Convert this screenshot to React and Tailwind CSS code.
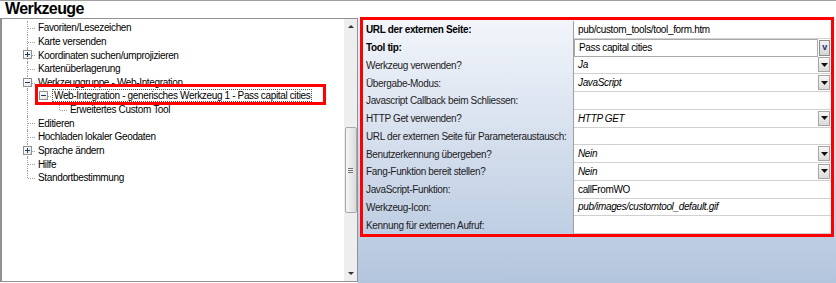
import React from "react";

const treeItems = [
  { level: 0, text: "Favoriten/Lesezeichen" },
  { level: 0, text: "Karte versenden" },
  { level: 0, text: "Koordinaten suchen/umprojizieren", box: "+" },
  { level: 0, text: "Kartenüberlagerung" },
  { level: 0, text: "Werkzeuggruppe - Web-Integration", box: "-" },
  { level: 1, text: "Web-Integration - generisches Werkzeug 1 - Pass capital cities", box: "-", focus: true },
  { level: 2, text: "Erweitertes Custom Tool" },
  { level: 0, text: "Editieren" },
  { level: 0, text: "Hochladen lokaler Geodaten" },
  { level: 0, text: "Sprache ändern", box: "+" },
  { level: 0, text: "Hilfe" },
  { level: 0, text: "Standortbestimmung", last: true },
];

const rows = [
  { label: "URL der externen Seite:", bold: true, value: "pub/custom_tools/tool_form.htm" },
  { label: "Tool tip:", bold: true, value: "Pass capital cities", type: "tooltip" },
  { label: "Werkzeug verwenden?", value: "Ja", italic: true, type: "dropdown" },
  { label: "Übergabe-Modus:", value: "JavaScript", italic: true, type: "dropdown" },
  { label: "Javascript Callback beim Schliessen:", value: "" },
  { label: "HTTP Get verwenden?", value: "HTTP GET", italic: true, type: "dropdown" },
  { label: "URL der externen Seite für Parameteraustausch:", value: "" },
  { label: "Benutzerkennung übergeben?", value: "Nein", italic: true, type: "dropdown" },
  { label: "Fang-Funktion bereit stellen?", value: "Nein", italic: true, type: "dropdown" },
  { label: "JavaScript-Funktion:", value: "callFromWO" },
  { label: "Werkzeug-Icon:", value: "pub/images/customtool_default.gif", italic: true },
  { label: "Kennung für externen Aufruf:", value: "" },
];

function ExpandBox({ sign }) {
  return (
    <div className="absolute left-[4px] top-[2px] w-[9px] h-[9px] border border-[#919191] bg-gradient-to-br from-white to-[#e6e6e6] flex items-center justify-center">
      <div className="relative w-[5px] h-[5px]">
        <div className="absolute left-0 top-[2px] w-[5px] h-[1px] bg-[#1c3b6e]" />
        {sign === "+" && <div className="absolute left-[2px] top-0 w-[1px] h-[5px] bg-[#1c3b6e]" />}
      </div>
    </div>
  );
}

function TreeRow({ item }) {
  const cols = [];
  for (let l = 0; l <= item.level; l++) {
    const own = l === item.level;
    let vertical = null;
    if (!own) {
      if (l === 0) vertical = "full";
    } else {
      if (item.level === 0) vertical = item.last ? "half" : "full";
      else vertical = "half";
    }
    cols.push(
      <div key={l} className="relative w-[16px] h-full shrink-0">
        {vertical === "full" && (
          <div className="absolute left-[8px] top-0 bottom-0 border-l border-dotted border-[#a0a0a0]" />
        )}
        {vertical === "half" && (
          <div className="absolute left-[8px] top-0 h-[7px] border-l border-dotted border-[#a0a0a0]" />
        )}
        {own && (
          <div className="absolute left-[9px] right-0 top-[7px] border-t border-dotted border-[#a0a0a0]" />
        )}
        {own && item.box && <ExpandBox sign={item.box} />}
      </div>
    );
  }
  return (
    <div className="flex h-[13.64px] items-center">
      {cols}
      <span
        className={
          "ml-[1px] whitespace-nowrap leading-[11px] text-black " +
          (item.focus ? "border border-dotted border-[#555] px-[1px]" : "px-[1px] border border-transparent")
        }
      >
        {item.text}
      </span>
    </div>
  );
}

function DropButton() {
  return (
    <div className="w-[12px] h-[15px] mr-[1px] border border-[#a5a5a5] bg-gradient-to-b from-[#f7f7f7] to-[#dadada] flex items-center justify-center shrink-0">
      <svg width="7" height="4" viewBox="0 0 7 4">
        <path d="M0 0 H7 L3.5 4 Z" fill="#111" />
      </svg>
    </div>
  );
}

function ValueCell({ row }) {
  const textCls =
    "whitespace-nowrap text-black " + (row.italic ? "italic" : "");
  if (row.type === "tooltip") {
    return (
      <div className="flex items-center h-full bg-white">
        <div className="flex-1 h-full border border-[#a9a9a9] flex items-center pl-[4px]">
          <span className={textCls}>{row.value}</span>
        </div>
        <div className="w-[11px] h-[16px] mx-[1px] border border-[#8c8c8c] bg-gradient-to-b from-[#f2f2f2] to-[#d4d4d4] flex items-center justify-center shrink-0">
          <span className="font-bold text-[9px] leading-none text-[#1b2e6b]">v</span>
        </div>
      </div>
    );
  }
  return (
    <div className="flex items-center h-full bg-white border-b border-[#d0d0d0]">
      <div className="flex-1 flex items-center pl-[4px] overflow-hidden">
        <span className={textCls}>{row.value}</span>
      </div>
      {row.type === "dropdown" && <DropButton />}
    </div>
  );
}

export default function App() {
  return (
    <div className="w-[836px] h-[283px] bg-white border-t border-[#a0a0a0] overflow-hidden font-['Liberation_Sans',Arial,sans-serif] text-[10px] tracking-[-0.35px] flex flex-col">
      <div className="h-[16px] pl-[5px] flex items-center">
        <span className="text-[16px] font-bold tracking-[-0.6px] leading-none text-black">Werkzeuge</span>
      </div>
      <div className="flex flex-1 min-h-0">
        {/* Tree panel */}
        <div className="w-[358px] mt-[1px] mb-[1px] border-l-2 border-t border-b border-r border-[#8e9298] bg-white flex relative">
          <div className="flex-1 pt-[2px] pl-[17px]">
            {treeItems.map((it, i) => (
              <TreeRow key={i} item={it} />
            ))}
          </div>
          {/* red annotation around focused item */}
          <div className="absolute left-[33px] top-[65px] w-[291px] h-[21px] border-[3px] border-[#ff0000] pointer-events-none" />
          {/* scrollbar */}
          <div className="w-[13px] bg-[#eeeeee] flex flex-col items-center">
            <div className="h-[15px] w-full flex items-center justify-center">
              <svg width="6" height="3" viewBox="0 0 6 3">
                <path d="M0 3 H6 L3 0 Z" fill="#333" />
              </svg>
            </div>
            <div className="h-[93px]" />
            <div className="h-[86px] w-[12px] rounded-[2px] border border-[#a8a8a8] bg-gradient-to-r from-[#f6f6f6] to-[#dcdcdc] flex items-center justify-center">
              <div className="flex flex-col gap-[1px]">
                <div className="w-[5px] h-[1px] bg-[#777]" />
                <div className="w-[5px] h-[1px] bg-[#777]" />
                <div className="w-[5px] h-[1px] bg-[#777]" />
              </div>
            </div>
            <div className="flex-1" />
            <div className="h-[15px] w-full flex items-center justify-center">
              <svg width="6" height="3" viewBox="0 0 6 3">
                <path d="M0 0 H6 L3 3 Z" fill="#333" />
              </svg>
            </div>
          </div>
        </div>
        {/* Right panel */}
        <div className="flex-1 bg-gradient-to-b from-[#f3f6fb] to-[#b3c5dd] pl-[2px] pr-[2px]">
          <div className="border-[3px] border-[#ff0000] pt-[1px]">
            {rows.map((r, i) => (
              <div key={i} className="flex h-[17.75px]">
                <div className="w-[210px] flex items-center pl-[3px] overflow-hidden">
                  <span className={"whitespace-nowrap " + (r.bold ? "font-bold text-black" : "text-[#1d1b24]")}>
                    {r.label}
                  </span>
                </div>
                <div className="flex-1 border-l border-[#a0a0a0]">
                  <ValueCell row={r} />
                </div>
              </div>
            ))}
          </div>
        </div>
      </div>
    </div>
  );
}
